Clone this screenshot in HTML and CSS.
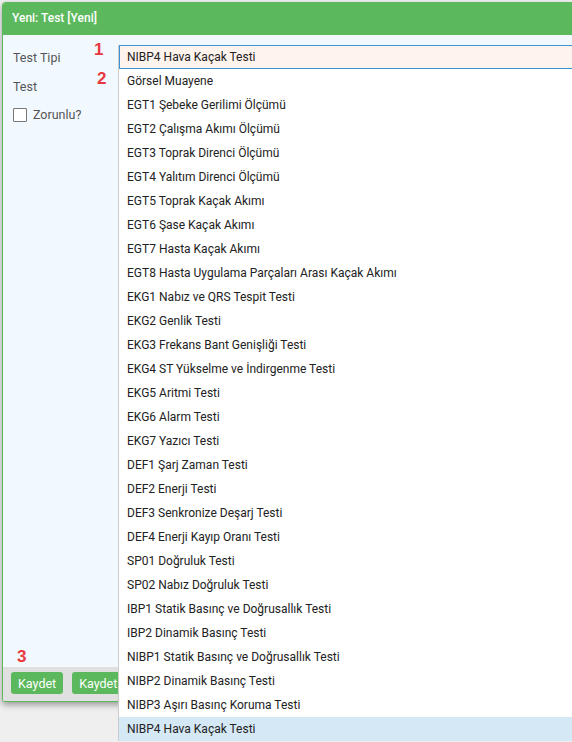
FILE: index.html
```html
<!DOCTYPE html>
<html lang="tr">
<head>
<meta charset="utf-8">
<link rel="stylesheet" href="styles.css">
</head>
<body>
<div class="dialog">
  <div class="dlg-head">Yeni: Test [Yeni]</div>
  <div class="dlg-body">
    <div class="row"><span class="lbl">Test Tipi</span></div>
    <div class="row"><span class="lbl">Test</span></div>
    <label class="chk-row"><span class="chk"></span><span class="lbl">Zorunlu?</span></label>
    <span class="mark m1">1</span>
    <span class="mark m2">2</span>
    <span class="mark m3">3</span>
  </div>
  <div class="dlg-foot">
    <button class="btn">Kaydet</button>
    <button class="btn">Kaydet</button>
  </div>
</div>
<div class="dropdown">
  <div class="sel">NIBP4 Hava Kaçak Testi</div>
  <ul class="list">
    <li>Görsel Muayene</li>
    <li>EGT1 Şebeke Gerilimi Ölçümü</li>
    <li>EGT2 Çalışma Akımı Ölçümü</li>
    <li>EGT3 Toprak Direnci Ölçümü</li>
    <li>EGT4 Yalıtım Direnci Ölçümü</li>
    <li>EGT5 Toprak Kaçak Akımı</li>
    <li>EGT6 Şase Kaçak Akımı</li>
    <li>EGT7 Hasta Kaçak Akımı</li>
    <li>EGT8 Hasta Uygulama Parçaları Arası Kaçak Akımı</li>
    <li>EKG1 Nabız ve QRS Tespit Testi</li>
    <li>EKG2 Genlik Testi</li>
    <li>EKG3 Frekans Bant Genişliği Testi</li>
    <li>EKG4 ST Yükselme ve İndirgenme Testi</li>
    <li>EKG5 Aritmi Testi</li>
    <li>EKG6 Alarm Testi</li>
    <li>EKG7 Yazıcı Testi</li>
    <li>DEF1 Şarj Zaman Testi</li>
    <li>DEF2 Enerji Testi</li>
    <li>DEF3 Senkronize Deşarj Testi</li>
    <li>DEF4 Enerji Kayıp Oranı Testi</li>
    <li>SP01 Doğruluk Testi</li>
    <li>SP02 Nabız Doğruluk Testi</li>
    <li>IBP1 Statik Basınç ve Doğrusallık Testi</li>
    <li>IBP2 Dinamik Basınç Testi</li>
    <li>NIBP1 Statik Basınç ve Doğrusallık Testi</li>
    <li>NIBP2 Dinamik Basınç Testi</li>
    <li>NIBP3 Aşırı Basınç Koruma Testi</li>
    <li class="hl">NIBP4 Hava Kaçak Testi</li>
  </ul>
</div>
</body>
</html>
```

FILE: styles.css
```css
html, body {
  margin: 0;
  padding: 0;
  overflow: hidden;
  height: 742px;
}
body {
  background: #efefef;
  font-family: Roboto, "Noto Sans", Arial, sans-serif;
  font-size: 12px;
  color: #222;
  position: relative;
}
.dialog {
  margin: 2px 0 0 2px;
  width: 569px;
  height: 698px;
  border: 1px solid #5cb85c;
  border-right: 0;
  border-radius: 4px 0 0 3px;
  box-shadow: 0 3px 6px rgba(0,0,0,0.35);
  display: flex;
  flex-direction: column;
  background: #f1f8fe;
}
.dlg-head {
  background: #5cb85c;
  color: #fff;
  height: 32px;
  line-height: 31px;
  padding-left: 9px;
  font-size: 12px;
  font-weight: 500;
  border-radius: 3px 0 0 0;
}
.dlg-body {
  flex: 1;
  position: relative;
  padding: 12px 0 0 10px;
  color: #555;
}
.row {
  height: 29px;
  line-height: 21px;
}
.lbl {
  font-size: 12.5px;
  color: #555;
}
.chk-row {
  display: flex;
  align-items: center;
  gap: 6px;
  margin-top: 2px;
}
.chk {
  width: 12px;
  height: 12px;
  border: 1px solid #777;
  background: #fff;
  border-radius: 1px;
}
.mark {
  position: absolute;
  color: #e8383d;
  font-family: Arial, "Liberation Sans", sans-serif;
  font-weight: 700;
  font-size: 17px;
  line-height: 16px;
}
.m1 { left: 91px; top: 7px; }
.m2 { left: 94px; top: 36px; }
.m3 { left: 14px; top: 614px; }
.dlg-foot {
  background: #e0e0e0;
  height: 34px;
  padding: 5px 0 0 8px;
  box-sizing: border-box;
  display: flex;
  gap: 9px;
  align-items: flex-start;
}
.btn {
  background: #5cb85c;
  color: #fff;
  border: 0;
  border-radius: 3px;
  height: 22px;
  padding: 0 7px;
  font-family: Roboto, "Noto Sans", Arial, sans-serif;
  font-size: 12.5px;
}
.dropdown {
  position: absolute;
  left: 118px;
  top: 45px;
  width: 453px;
  background: #fff;
  border-left: 1px solid #ccc;
}
.sel {
  height: 22px;
  line-height: 22px;
  border: 1px solid #3c94d6;
  border-right: 0;
  background: #fff3ee;
  padding-left: 7px;
  color: #222;
}
.list {
  list-style: none;
  margin: 0;
  padding: 0;
}
.list li {
  height: 24px;
  line-height: 24px;
  padding-left: 8px;
}
.list li.hl {
  background: #d5e8f5;
}
```
